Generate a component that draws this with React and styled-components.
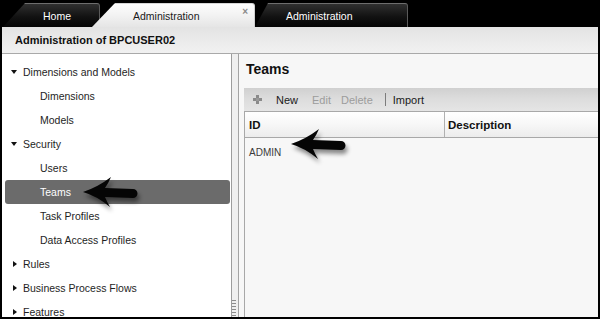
import React from 'react';
import styled, { createGlobalStyle } from 'styled-components';

const Global = createGlobalStyle`
  html, body { margin: 0; padding: 0; background: #000; }
  body { font-family: "Liberation Sans", Arial, sans-serif; }
  #root { width: 600px; height: 319px; overflow: hidden; }
`;

const Screen = styled.div`
  width: 600px;
  height: 319px;
  background: #000;
  display: flex;
  flex-direction: column;
`;

const TabBar = styled.div`
  height: 27px;
  flex-shrink: 0;
  display: flex;
  align-items: flex-end;
  padding-left: 3px;
  box-sizing: border-box;
`;

const Tab = styled.div`
  position: relative;
  box-sizing: border-box;
  height: 24px;
  width: ${p => p.$w}px;
  margin-left: ${p => p.$offset || 0}px;
  z-index: ${p => (p.$active ? 2 : 1)};
  display: flex;
  align-items: center;
  padding-left: ${p => p.$pad}px;
  font-size: 10.5px;
  color: ${p => (p.$active ? '#1a1a1a' : '#ffffff')};
  background: ${p =>
    p.$active
      ? 'linear-gradient(#fdfdfd, #f2f2f2 50%, #e5e5e5)'
      : 'linear-gradient(#303030, #121212 55%, #050505)'};
  border-top: 1px solid ${p => (p.$active ? '#d6d6d6' : '#6e6e6e')};
  border-right: 1px solid ${p => (p.$active ? '#cfcfcf' : '#5a5a5a')};
  border-top-right-radius: 3px;
  clip-path: polygon(${p => p.$slant}px 0, 100% 0, 100% 100%, 0 100%);
`;

const TabClose = styled.span`
  margin-left: auto;
  margin-right: 6px;
  align-self: flex-start;
  margin-top: 3px;
  font-size: 10px;
  line-height: 10px;
  font-weight: bold;
  color: #8a8a8a;
`;

const Window = styled.div`
  flex: 1;
  min-height: 0;
  margin: 0 2px 2px 2px;
  display: flex;
  flex-direction: column;
  background: #f0f0f0;
`;

const Header = styled.div`
  height: 26px;
  flex-shrink: 0;
  border-bottom: 1px solid #a9a9a9;
  background: linear-gradient(#e3e3e3, #ececec 60%, #f1f1f1);
  display: flex;
  align-items: center;
  padding-left: 13px;
  font-size: 11px;
  font-weight: bold;
  color: #111;
`;

const Body = styled.div`
  flex: 1;
  min-height: 0;
  display: flex;
`;

const Sidebar = styled.div`
  width: 230px;
  flex-shrink: 0;
  background: #ffffff;
  border-right: 1px solid #9c9c9c;
  padding-top: 6px;
  box-sizing: border-box;
  overflow: hidden;
`;

const TreeRow = styled.div`
  position: relative;
  height: 24px;
  margin: 0 1px 0 3px;
  display: flex;
  align-items: center;
  padding-left: ${p => (p.$child ? 35 : 5)}px;
  border-radius: 3px;
  background: ${p => (p.$selected ? '#6b6b6b' : 'transparent')};
  color: ${p => (p.$selected ? '#ffffff' : '#1e1e1e')};
  font-size: 10.5px;
  white-space: nowrap;
`;

const CaretBox = styled.span`
  width: 7px;
  margin-right: 6px;
  display: flex;
  justify-content: center;
  align-items: center;
`;

const Caret = styled.span`
  width: 0;
  height: 0;
  ${p =>
    p.$open
      ? `border-left: 3.5px solid transparent;
         border-right: 3.5px solid transparent;
         border-top: 4px solid #111;`
      : `border-top: 3.5px solid transparent;
         border-bottom: 3.5px solid transparent;
         border-left: 4px solid #111;
         margin-left: 2px;`}
`;

const Splitter = styled.div`
  width: 6px;
  flex-shrink: 0;
  background: #efefef;
  display: flex;
  flex-direction: column;
  justify-content: flex-end;
`;

const Grip = styled.div`
  width: 4px;
  height: 17px;
  background: repeating-linear-gradient(to bottom, #8c8c8c 0 1px, transparent 1px 3px);
`;

const Main = styled.div`
  flex: 1;
  min-width: 0;
  border-left: 1px solid #a3a3a3;
  background: #f7f7f7;
  padding-left: 5px;
  display: flex;
  flex-direction: column;
`;

const Title = styled.div`
  height: 34px;
  box-sizing: border-box;
  padding: 7px 0 0 2px;
  line-height: 17px;
  font-size: 14px;
  font-weight: bold;
  color: #111;
`;

const Toolbar = styled.div`
  height: 23px;
  flex-shrink: 0;
  display: flex;
  align-items: center;
  padding-left: 9px;
  background: linear-gradient(#d0d0d0, #dcdcdc 45%, #e5e5e5);
`;

const ToolItem = styled.span`
  margin-left: ${p => p.$ml || 0}px;
  font-size: 11px;
  color: ${p => (p.$disabled ? '#9c9c9c' : '#1a1a1a')};
  white-space: nowrap;
`;

const ToolSep = styled.span`
  margin-left: ${p => p.$ml}px;
  width: 1px;
  height: 13px;
  background: #7c7c7c;
`;

const Table = styled.div`
  flex: 1;
  border-left: 1px solid #a8a8a8;
  border-top: 1px solid #a8a8a8;
  display: flex;
  flex-direction: column;
`;

const HeaderRow = styled.div`
  height: 25px;
  display: flex;
  border-bottom: 1px solid #a8a8a8;
  background: linear-gradient(#ffffff, #f7f7f7 50%, #ececec);
`;

const HeaderCell = styled.div`
  width: ${p => (p.$w ? `${p.$w}px` : 'auto')};
  flex: ${p => (p.$w ? '0 0 auto' : '1')};
  box-sizing: border-box;
  display: flex;
  align-items: center;
  padding-left: ${p => p.$pl}px;
  border-right: ${p => (p.$w ? '1px solid #b0b0b0' : 'none')};
  font-size: 11.5px;
  font-weight: bold;
  color: #111;
`;

const DataRow = styled.div`
  position: relative;
  height: 28px;
  display: flex;
  align-items: center;
  padding-left: 4px;
  font-size: 10px;
  color: #3a3a3a;
`;

const ArrowSvg = styled.svg`
  position: absolute;
  left: ${p => p.$x}px;
  top: ${p => p.$y}px;
  overflow: visible;
  filter: drop-shadow(2px 4px 2px rgba(0, 0, 0, 0.45));
  pointer-events: none;
`;

function Arrow({ x, y }) {
  return (
    <ArrowSvg $x={x} $y={y} width="60" height="36" viewBox="0 0 60 36">
      <path
        d="M2 16 Q17 11 30 1 Q27 8 24 12 L52 13 A4.5 4.5 0 0 1 52 22 L24 21 Q26 26 29 31 Q16 20 2 16 Z"
        fill="#050505"
      />
    </ArrowSvg>
  );
}

function PlusIcon() {
  return (
    <svg width="9" height="9" viewBox="0 0 9 9">
      <rect x="3" y="0" width="3" height="9" fill="#8a8a8a" />
      <rect x="0" y="3" width="9" height="3" fill="#8a8a8a" />
      <rect x="3" y="3" width="3" height="3" fill="#9a9a9a" />
    </svg>
  );
}

const tree = [
  { label: 'Dimensions and Models', top: true, open: true },
  { label: 'Dimensions' },
  { label: 'Models' },
  { label: 'Security', top: true, open: true },
  { label: 'Users' },
  { label: 'Teams', selected: true, arrow: true },
  { label: 'Task Profiles' },
  { label: 'Data Access Profiles' },
  { label: 'Rules', top: true },
  { label: 'Business Process Flows', top: true },
  { label: 'Features', top: true },
];

export default function App() {
  return (
    <Screen>
      <Global />
      <TabBar>
        <Tab $w={97} $slant={22} $pad={40}>Home</Tab>
        <Tab $w={163} $slant={23} $pad={41} $offset={-8} $active>
          Administration
          <TabClose>×</TabClose>
        </Tab>
        <Tab $w={153} $slant={13} $pad={31}>Administration</Tab>
      </TabBar>
      <Window>
        <Header>Administration of BPCUSER02</Header>
        <Body>
          <Sidebar>
            {tree.map(item => (
              <TreeRow key={item.label} $child={!item.top} $selected={item.selected}>
                {item.top && (
                  <CaretBox>
                    <Caret $open={item.open} />
                  </CaretBox>
                )}
                {item.label}
                {item.arrow && <Arrow x={76} y={-4} />}
              </TreeRow>
            ))}
          </Sidebar>
          <Splitter>
            <Grip />
          </Splitter>
          <Main>
            <Title>Teams</Title>
            <Toolbar>
              <PlusIcon />
              <ToolItem $ml={14}>New</ToolItem>
              <ToolItem $ml={14} $disabled>Edit</ToolItem>
              <ToolItem $ml={10} $disabled>Delete</ToolItem>
              <ToolSep $ml={12} />
              <ToolItem $ml={7}>Import</ToolItem>
            </Toolbar>
            <Table>
              <HeaderRow>
                <HeaderCell $w={200} $pl={4}>ID</HeaderCell>
                <HeaderCell $pl={3}>Description</HeaderCell>
              </HeaderRow>
              <DataRow>
                ADMIN
                <Arrow x={44} y={-10} />
              </DataRow>
            </Table>
          </Main>
        </Body>
      </Window>
    </Screen>
  );
}
